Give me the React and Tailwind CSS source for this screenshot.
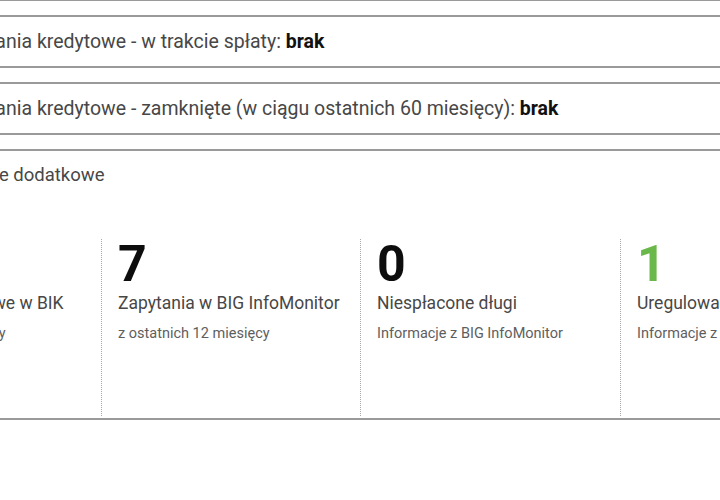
import React from 'react';

const stats = [
  { value: '', label: 'Zapytania kredytowe w BIK', note: 'z ostatnich 12 miesięcy', width: 'w-[263px]', first: true },
  { value: '7', label: 'Zapytania w BIG InfoMonitor', note: 'z ostatnich 12 miesięcy', width: 'w-[259px]' },
  { value: '0', label: 'Niespłacone długi', note: 'Informacje z BIG InfoMonitor', width: 'w-[260px]' },
  { value: '1', label: 'Uregulowane długi', note: 'Informacje z BIG InfoMonitor', width: 'w-[260px]', green: true },
];

function Row({ children }) {
  return (
    <div className="h-[53px] border-y-2 border-[#9a9a9a] flex items-center pl-[73px] text-[19.5px] text-[#474747]">
      {children}
    </div>
  );
}

export default function App() {
  return (
    <div className="w-[720px] h-[500px] overflow-hidden bg-white" style={{ fontFamily: 'Roboto, "Noto Sans", sans-serif' }}>
      <div className="ml-[-162px] w-[1100px]">
        {/* koniec poprzedniej sekcji */}
        <div className="-mt-[1px] border-b-2 border-[#9a9a9a]" />

        <div className="mt-[14px]">
          <Row>
            Zobowiązania kredytowe - w trakcie spłaty:&nbsp;<b className="font-bold text-[#111]">brak</b>
          </Row>
        </div>

        <div className="mt-[14px]">
          <Row>
            Zobowiązania kredytowe - zamknięte (w ciągu ostatnich 60 miesięcy):&nbsp;<b className="font-bold text-[#111]">brak</b>
          </Row>
        </div>

        <div className="mt-[14px] border-y-2 border-[#9a9a9a]">
          <div className="pl-[82px] pt-[12px] text-[18.5px] leading-[24px] text-[#474747]">Informacje dodatkowe</div>
          <div className="flex mt-[52px] pb-[2px]">
            {stats.map((s, i) => (
              <div
                key={i}
                className={`${s.width} h-[177px] pl-[16px] ${s.first ? '' : 'border-l border-dotted border-[#a8a8a8]'}`}
              >
                <div className={`h-[50px] text-[50px] leading-[50px] font-bold ${s.green ? 'text-[#6bb84a]' : 'text-[#0d0d0d]'}`}>
                  {s.value}
                </div>
                <div className="mt-[2px] text-[17.5px] leading-[24px] text-[#474747] whitespace-nowrap">{s.label}</div>
                <div className="mt-[9px] text-[14.5px] leading-[20px] text-[#5e5e5e] whitespace-nowrap">{s.note}</div>
              </div>
            ))}
          </div>
        </div>
      </div>
    </div>
  );
}
